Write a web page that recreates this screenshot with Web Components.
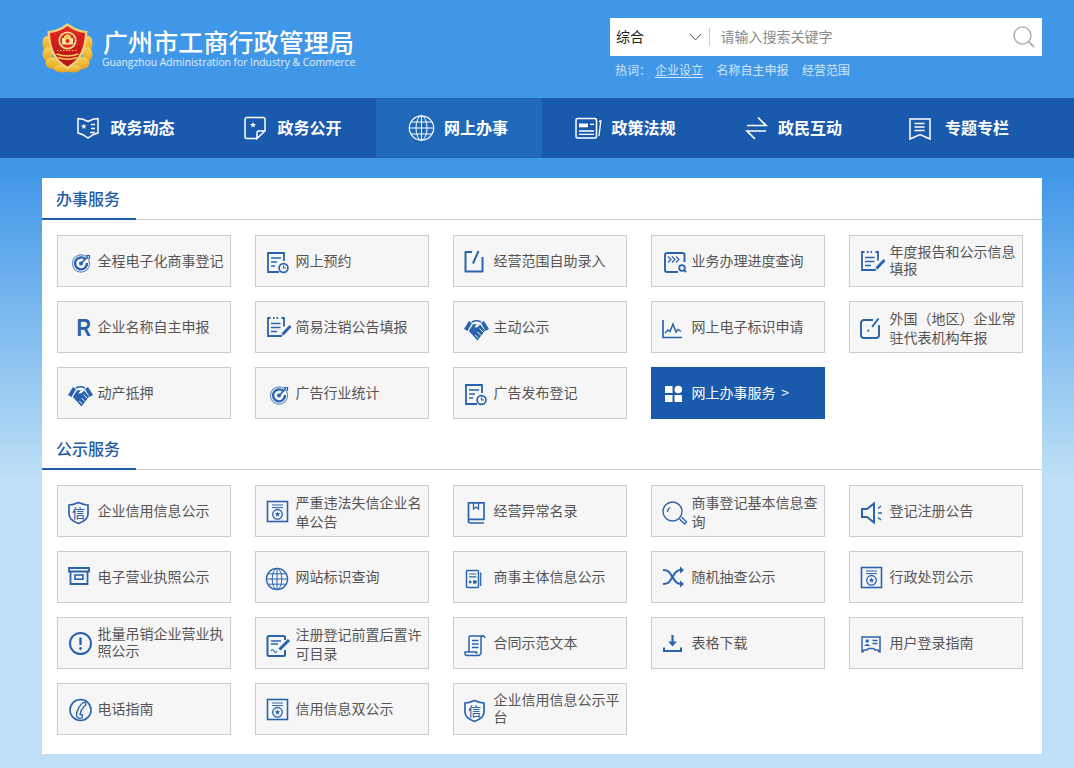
<!DOCTYPE html>
<html lang="zh-CN"><head><meta charset="utf-8"><title>广州市工商行政管理局</title>
<style>
html,body{margin:0;padding:0}
body{font-family:"Noto Sans CJK SC","Liberation Sans",sans-serif;background:linear-gradient(#4097e8 0,#4097e8 172px,#bfe0f6 480px,#bfe0f6 100%);min-height:768px;overflow:hidden;text-spacing-trim:space-all}
</style></head><body>
<gz-header>
  <gz-brand slot="brand" title-text="广州市工商行政管理局" en="Guangzhou Administration for Industry &amp; Commerce"></gz-brand>
  <gz-search slot="search"></gz-search>
</gz-header>
<gz-nav>
  <gz-nav-item icon="nNews" w="24">政务动态</gz-nav-item>
  <gz-nav-item icon="nOpen" w="24">政务公开</gz-nav-item>
  <gz-nav-item icon="nGlobe" w="24" active>网上办事</gz-nav-item>
  <gz-nav-item icon="nPolicy" w="26">政策法规</gz-nav-item>
  <gz-nav-item icon="nSwap" w="22" style="padding-left:3px">政民互动</gz-nav-item>
  <gz-nav-item icon="nTopic" w="26">专题专栏</gz-nav-item>
</gz-nav>
<gz-card>
  <gz-section heading="办事服务">
    <gz-tile icon="target">全程电子化商事登记</gz-tile>
    <gz-tile icon="formClock">网上预约</gz-tile>
    <gz-tile icon="editCorner">经营范围自助录入</gz-tile>
    <gz-tile icon="progress">业务办理进度查询</gz-tile>
    <gz-tile icon="notePencil">年度报告和公示信息填报</gz-tile>
    <gz-tile icon="rLogo">企业名称自主申报</gz-tile>
    <gz-tile icon="notePencil">简易注销公告填报</gz-tile>
    <gz-tile icon="handshake">主动公示</gz-tile>
    <gz-tile icon="chart">网上电子标识申请</gz-tile>
    <gz-tile icon="editSquare" tall>外国（地区）企业常驻代表机构年报</gz-tile>
    <gz-tile icon="handshake">动产抵押</gz-tile>
    <gz-tile icon="target">广告行业统计</gz-tile>
    <gz-tile icon="formClock">广告发布登记</gz-tile>
    <gz-tile icon="grid" primary>网上办事服务 &gt;</gz-tile>
  </gz-section>
  <gz-section heading="公示服务">
    <gz-tile icon="shield">企业信用信息公示</gz-tile>
    <gz-tile icon="cert" tall>严重违法失信企业名单公告</gz-tile>
    <gz-tile icon="book">经营异常名录</gz-tile>
    <gz-tile icon="magnifier" tall>商事登记基本信息查询</gz-tile>
    <gz-tile icon="speaker">登记注册公告</gz-tile>
    <gz-tile icon="box">电子营业执照公示</gz-tile>
    <gz-tile icon="globe">网站标识查询</gz-tile>
    <gz-tile icon="calc">商事主体信息公示</gz-tile>
    <gz-tile icon="shuffle">随机抽查公示</gz-tile>
    <gz-tile icon="cert">行政处罚公示</gz-tile>
    <gz-tile icon="alert">批量吊销企业营业执照公示</gz-tile>
    <gz-tile icon="docSign" tall>注册登记前置后置许可目录</gz-tile>
    <gz-tile icon="scroll">合同示范文本</gz-tile>
    <gz-tile icon="download">表格下载</gz-tile>
    <gz-tile icon="idCard">用户登录指南</gz-tile>
    <gz-tile icon="phone">电话指南</gz-tile>
    <gz-tile icon="cert">信用信息双公示</gz-tile>
    <gz-tile icon="shield">企业信用信息公示平台</gz-tile>
  </gz-section>
</gz-card>
<script>
const star=(cx,cy,r)=>{let p=[];for(let i=0;i<10;i++){const a=-Math.PI/2+i*Math.PI/5,q=i%2?r*.42:r;p.push((cx+q*Math.cos(a)).toFixed(2)+','+(cy+q*Math.sin(a)).toFixed(2))}return `<polygon points="${p.join(' ')}" fill="currentColor" stroke="none"/>`};
const cjk='font-family="Noto Sans CJK SC,sans-serif"';
const ICONS={
target:`<circle cx="13" cy="15.5" r="8.6" stroke-width="1.1" opacity=".7"/><path d="M17.3 11.2A6 6 0 1 0 19 15" stroke-width="2.4"/><circle cx="13" cy="15.5" r="2" fill="currentColor" stroke="none"/><path d="M13 15.5L20 8.5" stroke-width="1.6"/><path d="M18 7.5h3.5V11" stroke-width="1.2"/>`,
formClock:`<path d="M13 24H2V5h16v8" stroke-width="1.8"/><path d="M5 10h10M5 14h6M5 18h4" stroke-width="1.5"/><circle cx="17.5" cy="20" r="4.4" stroke-width="1.7"/><path d="M17.5 17.5V20H20" stroke-width="1.2"/>`,
editCorner:`<path d="M8 4H1.5v19.5h17V9" stroke-width="2" stroke-linejoin="round"/><path d="M9 15.5L14.5 3" stroke-width="2"/>`,
progress:`<path d="M22.5 14V7a2 2 0 0 0-2-2H5a2 2 0 0 0-2 2v15a2 2 0 0 0 2 2h11" stroke-width="1.9"/><path d="M6 8.5l3 3-3 3M10 8.5l3 3-3 3M14 8.5l3 3-3 3" stroke-width="1.2"/><circle cx="20" cy="20" r="2.8" stroke-width="1.8"/><path d="M22 22l2 2" stroke-width="2"/>`,
notePencil:`<path d="M4.5 4H2v18h13.5M18 12.5V4h-2.5" stroke-width="1.8"/><path d="M7 4h1.6M10.5 4h1.6" stroke-width="1.8"/><path d="M5 9.5h9.5M5 13.5h9.5M5 17.5h6" stroke-width="1.7"/><path d="M16.5 20.5L24.5 12" stroke-width="2.8"/><path d="M14.5 22.5l1.4-1.4" stroke-width="1.4"/>`,
rLogo:`<text transform="translate(8.5 22) scale(.84 1)" font-size="24" font-weight="700" font-family="Liberation Sans,sans-serif" fill="currentColor" stroke="none">R</text>`,
handshake:`<path d="M0 15L5 7l3 2-4.5 8zM25 15l-5-8-3 2 4.5 8z" fill="currentColor" stroke="none"/><path d="M8 8q4.5-2.5 9 0" stroke-width="1.6"/><path d="M4.8 17L9 10.2h4L10.5 13q2.5 2 5.5-2.5L20.5 16l.3 1-7.3 9.500z" fill="currentColor" stroke="none"/><path d="M14.3 24l-3-3M17 21.5l-3.5-3.500M19.5 18.5l-4-4" stroke="#f6f6f6" stroke-width="1"/>`,
chart:`<path d="M1 6v17.5h19" stroke-width="1.7"/><path d="M3 19l3-3 2 1.5L11 10l3 8 2-2.5 3 2" stroke-width="1.5"/>`,
editSquare:`<path d="M13 6H4a3 3 0 0 0-3 3v12a3 3 0 0 0 3 3h12a3 3 0 0 0 3-3V11" stroke-width="1.9"/><path d="M7.5 17.5l1.6-1.6" stroke-width="1.5"/><path d="M12 13l6.5-8.5" stroke-width="2"/>`,
grid:`<g fill="currentColor" stroke="none"><rect x="3" y="6" width="7.5" height="7"/><rect x="3" y="15" width="7.5" height="7"/><rect x="12.5" y="15" width="7.5" height="7"/><circle cx="16.3" cy="9.5" r="3.8"/></g>`,
shield:`<path d="M10.5 4.5Q5 7 1 7v9q0 6 9.5 9.5Q20 22 20 16V7q-4 0-9.5-2.5z" stroke-width="1.7"/><text x="10.5" y="20.2" text-anchor="middle" font-size="13" font-weight="500" ${cjk} fill="currentColor" stroke="none">信</text>`,
cert:`<rect x="1.5" y="3.5" width="20" height="20" stroke-width="1.6"/><path d="M6 7h11M6 9.6h11" stroke-width="1"/><circle cx="11.5" cy="16.3" r="4.8" stroke-width="1.3"/>`+star(11.5,16.3,3),
book:`<path d="M4.5 22V4.8H20v16.6H6.2a1.8 1.8 0 0 0 0 3.6H20" stroke-width="1.7"/><path d="M9.5 5v6l2.5-2 2.5 2V5" stroke-width="1.3"/>`,
magnifier:`<circle cx="10.5" cy="13.5" r="9.5" stroke-width="1.4"/><path d="M5.5 14a5 5 0 0 1 2.8-4.5" stroke-width="1.3"/><path d="M17.5 21l5 5 2-2-5-5" stroke-width="1.3"/>`,
speaker:`<path d="M2 11h5l7-5.5v19L7 19H2z" stroke-width="2"/><path d="M18 10.5l3-2.5M18 15h4M18 19.5l3 2.5" stroke-width="1.5"/>`,
box:`<path d="M1 4h20v3.5H1z" stroke-width="1.8"/><path d="M2.5 7.5V20h17V7.5" stroke-width="1.8"/><rect x="7" y="11" width="8" height="4.2" stroke-width="1.6"/>`,
globe:`<circle cx="11" cy="15" r="10.6" stroke-width="1.3"/><ellipse cx="11" cy="15" rx="4.8" ry="10.6" stroke-width="1"/><path d="M11 4.4v21.2M.6 15h20.8M2 9.8h18M2 20.2h18" stroke-width="1"/>`,
calc:`<rect x="2.5" y="6.5" width="12" height="17" rx="1" stroke-width="1.5"/><path d="M5 10h7.5M5 12.8h7.5" stroke-width="1.2"/><circle cx="6.2" cy="18" r="1.4" fill="currentColor" stroke="none"/><rect x="9" y="16.4" width="3.6" height="3.2" fill="currentColor" stroke="none"/><path d="M16.7 8.5V22" stroke-width="1.3"/>`,
shuffle:`<path d="M1 6c6 0 7 3 9.5 7s4 7 8.5 7M1 20c6 0 7-3 9.5-7s4-7 8.5-7" stroke-width="2"/><path d="M18 2.500l4 3.500-4 3.500zM18 16.500l4 3.500-4 3.500z" fill="currentColor" stroke="none"/>`,
alert:`<circle cx="12.5" cy="13.5" r="10.5" stroke-width="2"/><path d="M12.5 7.5V15" stroke-width="2.4"/><circle cx="12.5" cy="18.5" r="1.4" fill="currentColor" stroke="none"/>`,
docSign:`<path d="M19 10V7.5A1.500 1.500 0 0 0 17.500 6H3a1.500 1.500 0 0 0-1.500 1.500v17A1.500 1.500 0 0 0 3 26h14.500a1.500 1.500 0 0 0 1.500-1.500V20" stroke-width="2"/><path d="M5 11h10M5 14h7" stroke-width="1.3"/><path d="M5 21q1.500-3 3 0t3 0" stroke-width="1.2"/><path d="M13.500 19.500L23 10" stroke-width="3"/>`,
scroll:`<path d="M5 21.500V7.500A1.500 1.500 0 0 1 6.500 6H18a2 2 0 0 0-1 2v14a3 3 0 0 1-3 3.500H3a2 2 0 0 1-2-2v-1.500h11.500v2" stroke-width="1.5"/><path d="M18 6a2.500 2.500 0 0 1 3 2" stroke-width="1.5"/><path d="M8 10.500h6.500M8 14h6.500M8 17.500h6.500" stroke-width="1.5"/>`,
download:`<path d="M10.500 5v8" stroke-width="2.2"/><path d="M6 11.500h9L10.500 16.500z" fill="currentColor" stroke="none"/><path d="M2 17.500V21h17v-3.500" stroke-width="2"/>`,
idCard:`<path d="M2 7h18v15q-1.500 0-2-2h-3q-.5-1.500-2-1.500H9q-1.500 0-2 1.500H4q-.5 2-2 2z" stroke-width="1.5"/><circle cx="7.2" cy="11" r="1.7" fill="currentColor" stroke="none"/><path d="M4 16q3.200-3.800 6.400 0z" fill="currentColor" stroke="none"/><path d="M12.500 10.500h5M12.500 13.500h5" stroke-width="1.4"/>`,
phone:`<circle cx="12.5" cy="14" r="10.5" stroke-width="1.6"/><path d="M17 6l1 3-2 1.500c-2 2-3.500 5.500-4 8l2.500.5-.5 3c-2 .8-5 0-5.500-2-.3-5 3.500-12.500 8.500-14z" stroke-width="1.3"/>`,
nNews:`<path d="M2 2.500q5 0 10 3 5-3 10-3V17q-5 1-10 5-5-4-10-5z" stroke-width="1.5"/>`+star(7.8,10.5,3)+`<path d="M15 8.500h4M15 12.500h4M14 16.500h5" stroke-width="1.3"/>`,
nOpen:`<path d="M14 22.500H4a2 2 0 0 1-2-2V3.500a2 2 0 0 1 2-2h16a2 2 0 0 1 2 2V15l-8 7.500V17a2 2 0 0 1 2-2h6" stroke-width="1.5"/>`+star(10,9,3.2),
nGlobe:`<g transform="translate(-1.500 -2.500)"><circle cx="13" cy="14.500" r="12.200" stroke-width="1.2"/><ellipse cx="13" cy="14.500" rx="5.500" ry="12.200" stroke-width="1"/><path d="M13 2.300v24.400M.8 14.500h24.400M2.500 8.500h21M2.500 20.500h21" stroke-width="1"/></g>`,
nPolicy:`<rect x="1" y="2.500" width="20.500" height="19.500" rx="1.500" stroke-width="1.5"/><rect x="4" y="7.500" width="9" height="3.800" fill="currentColor" stroke="none"/><path d="M15 8.300h4M4 15h15M4 18.300h15" stroke-width="1.3"/><path d="M24 5.500l1.800-.5L24 20" stroke-width="1.3"/>`,
nSwap:`<path d="M12 1.500l8 8H1M20 15H1l8 8" stroke-width="1.7"/>`,
nTopic:`<path d="M1 3h20v20l-10-4.500L1 23z" stroke-width="1.5"/><path d="M5.500 7.500h10M5.500 11h10M5.500 14.500h10" stroke-width="1.3"/>`
};
function tpl(html){const t=document.createElement('template');t.innerHTML=html;return t}
class Base extends HTMLElement{
  render(t){const s=this.attachShadow({mode:'open'});s.appendChild(t.content.cloneNode(true));return s}
}
class GzIcon extends Base{
  connectedCallback(){
    if(this.shadowRoot)return;
    const w=+this.getAttribute('w')||26,h=+this.getAttribute('h')||26;
    this.attachShadow({mode:'open'}).innerHTML=`<style>:host{display:block;width:${w}px;height:${h}px;flex:none}svg{display:block;overflow:visible}</style>
    <svg width="${w}" height="${h}" viewBox="0 0 ${w} ${h}" fill="none" stroke="currentColor" aria-hidden="true">${ICONS[this.getAttribute('name')]||''}</svg>`;
  }
}
customElements.define('gz-icon',GzIcon);
function makeIcon(name,w,h){const i=document.createElement('gz-icon');i.setAttribute('name',name);if(w)i.setAttribute('w',w);if(h)i.setAttribute('h',h);return i}
const headerT=tpl(`<style>:host{display:flex;justify-content:space-between;align-items:flex-start;height:98px;box-sizing:border-box;margin-left:42px;width:1000px}</style><slot name="brand"></slot><slot name="search"></slot>`);
customElements.define('gz-header',class extends Base{constructor(){super();this.render(headerT)}});
const brandT=tpl(`<style>
:host{display:flex;gap:9px;padding-top:23px;color:#fff}
.t{font-size:25px;line-height:26px;font-weight:500;letter-spacing:.1px;margin:5px 0 0 1px;white-space:nowrap}
.e{font:10.3px/12px "Open Sans",sans-serif;color:#e2f0fc;white-space:nowrap;margin-top:2px}
</style>
<svg width="51" height="50" viewBox="0 0 51 50">
<defs><linearGradient id="g" x1="0" y1="0" x2="0" y2="1"><stop offset="0" stop-color="#f8d25a"/><stop offset="1" stop-color="#e8a21a"/></linearGradient>
<linearGradient id="r" x1="0" y1="0" x2="0" y2="1"><stop offset="0" stop-color="#e2281e"/><stop offset="1" stop-color="#b5141a"/></linearGradient></defs>
<g fill="url(#g)"><ellipse cx="4.5" cy="20" rx="4" ry="7"/><ellipse cx="5.5" cy="31" rx="5" ry="7"/><ellipse cx="11" cy="40" rx="7.500" ry="6"/><ellipse cx="20" cy="45.500" rx="8" ry="4"/><ellipse cx="46.500" cy="20" rx="4" ry="7"/><ellipse cx="45.500" cy="31" rx="5" ry="7"/><ellipse cx="40" cy="40" rx="7.500" ry="6"/><ellipse cx="31" cy="45.500" rx="8" ry="4"/></g>
<path d="M25.500 0C20 4.500 13 7.500 5.500 8c0 17 6 31 20 38.500C39.500 39 45.500 25 45.500 8 38 7.500 31 4.500 25.500 0z" fill="#f6cf7a"/>
<path d="M25.500 3C20.500 7 14.500 9.500 8 10c.5 15 6 27 17.500 33.500C37 37 42.500 25 43 10 36.500 9.500 30.500 7 25.500 3z" fill="url(#r)"/>
<circle cx="25.500" cy="17.500" r="8.200" fill="#d92a1c" stroke="#f4d98a" stroke-width="1.800"/>
<path d="M20 15h11v6.500H20z" fill="#f6e2a0"/><path d="M22 13l3.500-2 3.500 2v3h-7z" fill="#f4cf5e"/><circle cx="25.500" cy="18" r="2" fill="#d92a1c"/>
<path d="M15 27.500h21" stroke="#f4cf5e" stroke-width="1" stroke-dasharray="1.500 1.500"/>
<path d="M14.500 31q11 4 22 0M16 34.500q9.500 3.500 19 0" stroke="#f4cf5e" stroke-width="1.400" fill="none"/>
</svg>
<div><div class="t"></div><div class="e"></div></div>`);
customElements.define('gz-brand',class extends Base{connectedCallback(){if(this.shadowRoot)return;const s=this.render(brandT);s.querySelector('.t').textContent=this.getAttribute('title-text');s.querySelector('.e').textContent=this.getAttribute('en')}});
const searchT=tpl(`<style>
:host{display:block;width:432px;padding-top:18px}
.box{display:flex;align-items:center;height:38px;background:#fff;font-size:14px}
.sel{display:flex;align-items:center;justify-content:space-between;width:100px;box-sizing:border-box;height:18px;padding:0 7px 0 6px;border-right:1px solid #ccc;color:#222}
.sel span{padding-bottom:2px}
.ph{flex:1;padding:0 0 2px 10.5px;color:#8a8a8a}
svg{display:block;margin-right:7px}
.hot{display:flex;font-size:12px;line-height:16px;color:#cfe6fb;padding:6px 0 0 5px}
.hot span:first-child{width:40px}.hot span+span{margin-right:13.5px}
.hot u{text-underline-offset:2px}
</style>
<div class="box"><div class="sel"><span>综合</span><svg style="margin:0" width="13" height="8" viewBox="0 0 13 8" fill="none" stroke="#555"><path d="M1 1l5.500 6L12 1"/></svg></div><span class="ph">请输入搜索关键字</span>
<svg width="22" height="22" viewBox="0 0 22 22" fill="none" stroke="#b5b5b5"><circle cx="9.500" cy="9.500" r="8.500" stroke-width="1.6"/><path d="M15.500 15.500L21 21" stroke-width="2"/></svg></div>
<div class="hot"><span>热词：</span><span><u>企业设立</u></span><span>名称自主申报</span><span>经营范围</span></div>`);
customElements.define('gz-search',class extends Base{constructor(){super();this.render(searchT)}});
const navT=tpl(`<style>:host{display:block;background:#1a5aad}.in{display:grid;grid-template-columns:167px 167px 166px 167px 167px 166px;margin-left:42px;width:1000px;height:60px}</style><div class="in"><slot></slot></div>`);
customElements.define('gz-nav',class extends Base{constructor(){super();this.render(navT)}});
const navItemT=tpl(`<style>
:host{display:flex;align-items:center;justify-content:center;gap:10px;color:#fff;font-size:16px;font-weight:700;height:60px;box-sizing:border-box}
:host([active]){background:#2069b8}
.t{padding-bottom:2px}
</style><span id="i"></span><span class="t"><slot></slot></span>`);
customElements.define('gz-nav-item',class extends Base{connectedCallback(){if(this.shadowRoot)return;const s=this.render(navItemT);s.getElementById('i').replaceWith(makeIcon(this.getAttribute('icon'),this.getAttribute('w'),'24'))}});
const cardT=tpl(`<style>:host{display:block;margin:20px 0 14px 42px;width:1000px;background:#fff;padding-bottom:19px}</style><slot></slot>`);
customElements.define('gz-card',class extends Base{constructor(){super();this.render(cardT)}});
const secT=tpl(`<style>
:host{display:block}
:host(:not(:first-child)){margin-top:9px}
h2{margin:0;height:42px;box-sizing:border-box;border-bottom:1px solid #ccc;font-size:16px;font-weight:500;line-height:41px;color:#1f5ca6;position:relative;padding-left:14px}
h2::after{content:"";position:absolute;left:0;bottom:-1px;width:94px;height:2px;background:#1f5ca6}
.g{display:grid;grid-template-columns:repeat(5,174px);grid-auto-rows:52px;gap:14px 24px;padding:15px 0 0 15px}
</style><h2></h2><div class="g"><slot></slot></div>`);
customElements.define('gz-section',class extends Base{connectedCallback(){if(this.shadowRoot)return;this.render(secT).querySelector('h2').textContent=this.getAttribute('heading')}});
const tileT=tpl(`<style>
:host{display:flex;align-items:center;box-sizing:border-box;height:52px;background:#f6f6f6;border:1px solid #ccc;padding:0 6px 0 10px;font-size:14px;line-height:17px;color:#555;gap:3.5px}
:host([primary]){background:#1a5aad;border-color:#1a5aad;color:#fff;word-spacing:2.5px}
:host([tall]){line-height:19px}
#i{color:#2a63ad;display:block;flex:none}:host([primary]) #i{color:#fff}
.t{min-width:0;padding-bottom:2px}
:host([tall]) .t{padding:2px 0 0}
</style><span id="i"></span><span class="t"><slot></slot></span>`);
customElements.define('gz-tile',class extends Base{connectedCallback(){if(this.shadowRoot)return;const s=this.render(tileT);s.getElementById('i').appendChild(makeIcon(this.getAttribute('icon')))}});
</script>
</body></html>
